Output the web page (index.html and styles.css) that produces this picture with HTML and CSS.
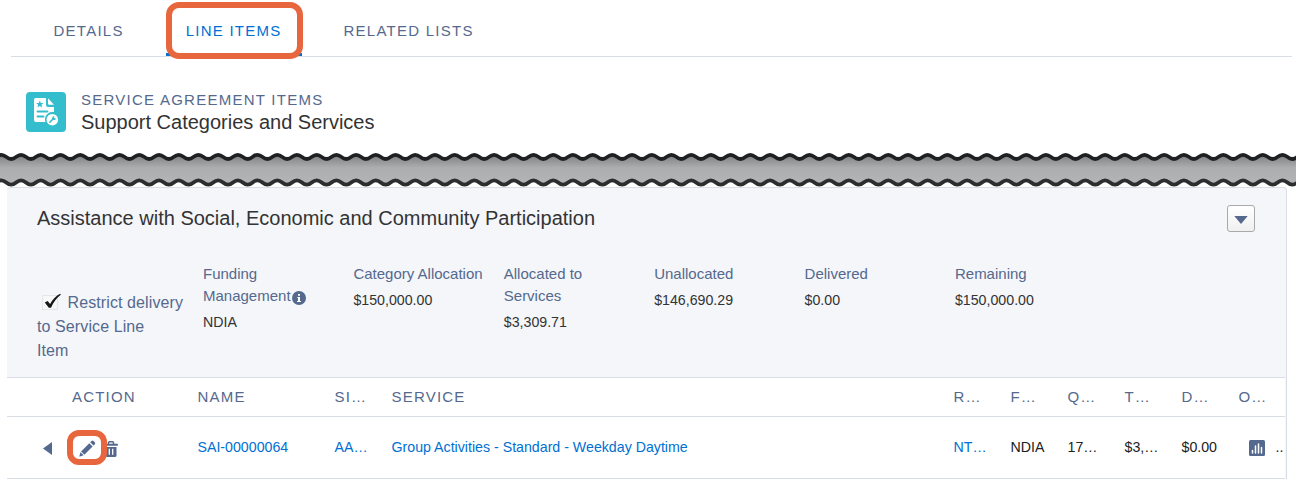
FILE: index.html
```html
<!DOCTYPE html>
<html lang="en">
<head>
    <meta charset="UTF-8">
    <meta name="viewport" content="width=device-width, initial-scale=1.0">
    <title>Service Agreement Items</title>
    <link rel="stylesheet" href="styles.css">
</head>
<body>

<nav class="tabs">
    <a class="tab">DETAILS</a>
    <a class="tab active">LINE ITEMS</a>
    <a class="tab">RELATED LISTS</a>
</nav>

<header class="page-header">
    <svg class="logo" viewBox="0 0 40 40">
        <rect width="40" height="40" rx="4" fill="#34becd"/>
        <path d="M9.500 6H20v7q0 2 2 2h6v5a7.500 7.500 0 0 0-8.500 10H10q-2 0-2-2V8q0-2 1.500-2z" fill="#fff"/>
        <path d="M22 6.200v5.300q0 1.200 1.200 1.200H28z" fill="#fff"/>
        <path d="M13.800 8.500l1 2.400 2.700.2-2 1.700.6 2.600-2.300-1.400-2.300 1.400.6-2.600-2-1.700 2.700-.2z" fill="#34becd"/>
        <path d="M11.500 19.500h10M11.500 24.500h6" stroke="#34becd" stroke-width="1.800" stroke-linecap="round"/>
        <circle cx="26.300" cy="27.700" r="6.800" fill="#34becd"/>
        <circle cx="26.300" cy="27.700" r="5.800" fill="#fff"/>
        <path d="M23.800 30.200l3.800-3.800" stroke="#34becd" stroke-width="1.500" stroke-linecap="round"/>
        <path d="M26.200 27l.3-2.300 2-.6-.7 1.500.9.900 1.200-.5-.7 1.900-2 .2z" fill="#34becd"/>
    </svg>
    <div>
        <p class="eyebrow">SERVICE AGREEMENT ITEMS</p>
        <h1>Support Categories and Services</h1>
    </div>
</header>

<!-- Torn strip between the two parts -->
<svg class="tear" width="1296" height="42" viewBox="0 0 1296 42">
    <defs>
        <linearGradient id="shade" x1="0" y1="10" x2="0" y2="38" gradientUnits="userSpaceOnUse">
            <stop offset="0" stop-color="#7c7d7e"/>
            <stop offset=".2" stop-color="#939495"/>
            <stop offset=".45" stop-color="#acadaf"/>
            <stop offset="1" stop-color="#b3b4b6"/>
        </linearGradient>
    </defs>
    <path id="tearFill" fill="url(#shade)"/>
    <path id="tearTop" fill="none" stroke="#1e2021" stroke-width="3.700"/>
    <path id="tearBottom" fill="none" stroke="#2b2d2e" stroke-width="3.700"/>
</svg>

<main class="panel">
    <section class="summary">
        <div class="summary-head">
            <h2>Assistance with Social, Economic and Community Participation</h2>
            <button class="menu-button" aria-label="Menu">
                <svg width="14" height="8" viewBox="0 0 14 8"><path d="M.3 0h13.400L7 8z" fill="#54698d"/></svg>
            </button>
        </div>
        <div class="fields">
            <label class="restrict">
                <svg class="check" width="20" height="18" viewBox="0 0 20 18">
                    <rect x=".5" y="2.500" width="15" height="14" fill="#f7f7f8" stroke="#d4d4d6" stroke-dasharray="1 1"/>
                    <path d="M2.800 9.500l2.800-1.500 2.500 3C10.500 6.500 14 2.800 18.200.8l.6.900C14.800 5 11.500 9 9 14.800H6.800z" fill="#161616"/>
                </svg>
                Restrict delivery<br>to Service Line<br>Item
            </label>
            <div class="field">
                <span class="field-label">Funding Management<svg class="info" width="14" height="14" viewBox="0 0 14 14"><circle cx="7" cy="7" r="7" fill="#54698d"/><path d="M6 3h2v1.800H6zM5.300 6H8v4h1v1H5v-1h1V7h-.7z" fill="#fff"/></svg></span>
                <span class="field-value">NDIA</span>
            </div>
            <div class="field">
                <span class="field-label">Category Allocation</span>
                <span class="field-value">$150,000.00</span>
            </div>
            <div class="field">
                <span class="field-label">Allocated to Services</span>
                <span class="field-value">$3,309.71</span>
            </div>
            <div class="field">
                <span class="field-label">Unallocated</span>
                <span class="field-value">$146,690.29</span>
            </div>
            <div class="field">
                <span class="field-label">Delivered</span>
                <span class="field-value">$0.00</span>
            </div>
            <div class="field">
                <span class="field-label">Remaining</span>
                <span class="field-value">$150,000.00</span>
            </div>
        </div>
    </section>

    <div class="items">
        <div class="row row-head">
            <span></span>
            <span>ACTION</span>
            <span>NAME</span>
            <span>SI…</span>
            <span>SERVICE</span>
            <span>R…</span>
            <span>F…</span>
            <span>Q…</span>
            <span>T…</span>
            <span>D…</span>
            <span>O…</span>
        </div>
        <div class="row">
            <span class="expand"><svg width="9" height="13" viewBox="0 0 9 13"><path d="M9 0v13L0 6.500z" fill="#54698d"/></svg></span>
            <span class="actions">
                <span class="edit">
                    <svg width="17" height="17" viewBox="0 0 17 17" fill="#54698d">
                        <path d="M10.300 3.200l3.300 3.300-8.200 8.200-3.300-3.300z"/>
                        <path d="M11.200 2.300l1.300-1.300q1-1 2 0l1.300 1.300q1 1 0 2l-1.300 1.300z"/>
                        <path d="M1.500 12.200l3.100 3.100-3.600 1.200q-.8.200-.6-.6z"/>
                    </svg>
                </span>
                <svg class="trash" width="14" height="16" viewBox="0 0 14 16">
                    <path d="M4.500 3V1.700q0-.9.900-.9h3.200q.9 0 .9.900V3" fill="none" stroke="#54698d" stroke-width="1.500"/>
                    <rect y="2.700" width="14" height="2" rx=".8" fill="#54698d"/>
                    <path d="M1.500 6h11v8.400q0 1.600-1.600 1.600H3.100q-1.600 0-1.600-1.600z" fill="#54698d"/>
                    <path d="M5.300 7.800v6M8.700 7.800v6" stroke="#fff" stroke-width="1.300"/>
                </svg>
            </span>
            <a>SAI-00000064</a>
            <a>AA…</a>
            <a>Group Activities - Standard - Weekday Daytime</a>
            <a>NT…</a>
            <span>NDIA</span>
            <span>17…</span>
            <span>$3,…</span>
            <span>$0.00</span>
            <span class="chart">
                <svg width="16" height="16" viewBox="0 0 16 16">
                    <rect width="16" height="16" rx="1.500" fill="#54698d"/>
                    <path d="M3.500 13v-2.500M6.500 13V6M9.500 13V4M12.500 13V7.500" stroke="#fff" stroke-width="1.500" stroke-linecap="round"/>
                </svg>
                <span class="more">..</span>
            </span>
        </div>
    </div>
</main>

<script>
    // Wavy edge made of half waves
    const half = 9.855;
    const count = 133;

    function wave(dir) {
        let d = "";
        for (let i = 0; i < count; i++) {
            d += `q${dir * half / 2} ${i % 2 === 0 ? -4.2 : 4.2} ${dir * half} 0`;
        }
        return d;
    }

    const topEdge = "M-3.6 11.9" + wave(1);
    const bottomEdge = "M-3.6 37.5" + wave(1);
    const endX = -3.6 + half * count;
    document.getElementById("tearTop").setAttribute("d", topEdge);
    document.getElementById("tearBottom").setAttribute("d", bottomEdge);
    document.getElementById("tearFill").setAttribute("d", topEdge + `L${endX} 37.5` + wave(-1) + "z");
</script>

</body>
</html>
```
FILE: styles.css
```css
*, *::after {
    box-sizing: border-box;
}
body {
    font-family: "Liberation Sans", Arial, sans-serif;
    background-color: #fff;
    color: #333;
    margin: 0;
    height: 480px;
    overflow: hidden;
}
h1, h2, p {
    margin: 0;
    font-weight: normal;
}
svg {
    flex-shrink: 0;
}
.tabs {
    display: flex;
    height: 57px;
    margin: 0 4px 0 11px;
    padding-left: 22.500px;
    gap: 22px;
    border-bottom: 1px solid #d8dde6;
}
.tab {
    position: relative;
    padding: 0 20px;
    line-height: 61px;
    font-size: 15px;
    letter-spacing: 1.25px;
    color: #54698d;
}
.tab.active {
    color: #0070d2;
    border-bottom: 3px solid #0070d2;
}
.tab.active::after {
    content: "";
    position: absolute;
    left: 0;
    top: 2px;
    width: 137px;
    height: 57px;
    border: 6px solid #e8663d;
    border-radius: 13px;
}
.page-header {
    display: flex;
    gap: 15px;
    height: 93px;
    padding: 35px 0 0 26px;
}
.logo {
    width: 40px;
    height: 40px;
}
.eyebrow {
    font-size: 15px;
    line-height: 15px;
    letter-spacing: 1.25px;
    color: #54698d;
}
h1 {
    font-size: 20px;
    line-height: 30px;
}
.tear {
    display: block;
    margin-top: -5px;
}
.panel {
    margin: 0 9px 0 7px;
    border: 1px solid #d8dde6;
    border-left: none;
    border-bottom: none;
    border-radius: 4px 4px 0 0;
    background-color: #f4f6fa;
    padding-right: 1px;
}
.summary {
    height: 189px;
    padding: 17px 30px 0;
}
.summary-head {
    display: flex;
    justify-content: space-between;
}
h2 {
    font-size: 20px;
    line-height: 26px;
}
.menu-button {
    display: flex;
    align-items: center;
    justify-content: center;
    width: 28px;
    height: 27px;
    padding: 2px 0 0;
    border: 1px solid #a9a9a9;
    border-radius: 3px;
    background: linear-gradient(#fff, #f0f0f0);
}
.fields {
    display: grid;
    grid-template-columns: 166px repeat(6, 150.400px);
    margin-top: 31px;
}
.restrict {
    padding-top: 28px;
    font-size: 16px;
    line-height: 24px;
    letter-spacing: .1px;
    color: #54698d;
    white-space: nowrap;
}
.check {
    margin: 0 1px 0 5px;
    vertical-align: -3px;
}
.field {
    display: flex;
    flex-direction: column;
    gap: 4px;
    padding-right: 18px;
}
.field-label {
    font-size: 15px;
    line-height: 22px;
    color: #54698d;
}
.info {
    margin-left: 1px;
    vertical-align: -4px;
}
.field-value {
    font-size: 14.200px;
    line-height: 22px;
}
.items {
    background-color: #fff;
    font-size: 14.200px;
    color: #222;
}
.row {
    display: grid;
    grid-template-columns: 29px 125.500px 137px 57px 562px repeat(5, 57px) 47px;
    align-items: center;
    height: 62px;
    padding: 0 0 2px 36px;
    border-bottom: 1px solid #d8dde6;
    white-space: nowrap;
}
.row-head {
    height: 40px;
    border-top: 1px solid #d8dde6;
    font-size: 15px;
    letter-spacing: 1.2px;
    color: #54698d;
}
.row a {
    color: #0070d2;
}
.expand {
    display: flex;
    padding-top: 4px;
}
.actions {
    display: flex;
    align-items: center;
    padding-top: 4px;
}
.edit {
    position: relative;
    display: flex;
    padding-left: 7px;
}
.edit::after {
    content: "";
    position: absolute;
    left: -5px;
    top: -10px;
    width: 40px;
    height: 35px;
    border: 6px solid #e8663d;
    border-radius: 12px;
}
.trash {
    margin-left: 8px;
}
.chart {
    display: flex;
    align-items: center;
    padding-left: 10px;
}
.chart svg {
    margin-top: 3px;
}
.more {
    margin-left: 11px;
}
```
